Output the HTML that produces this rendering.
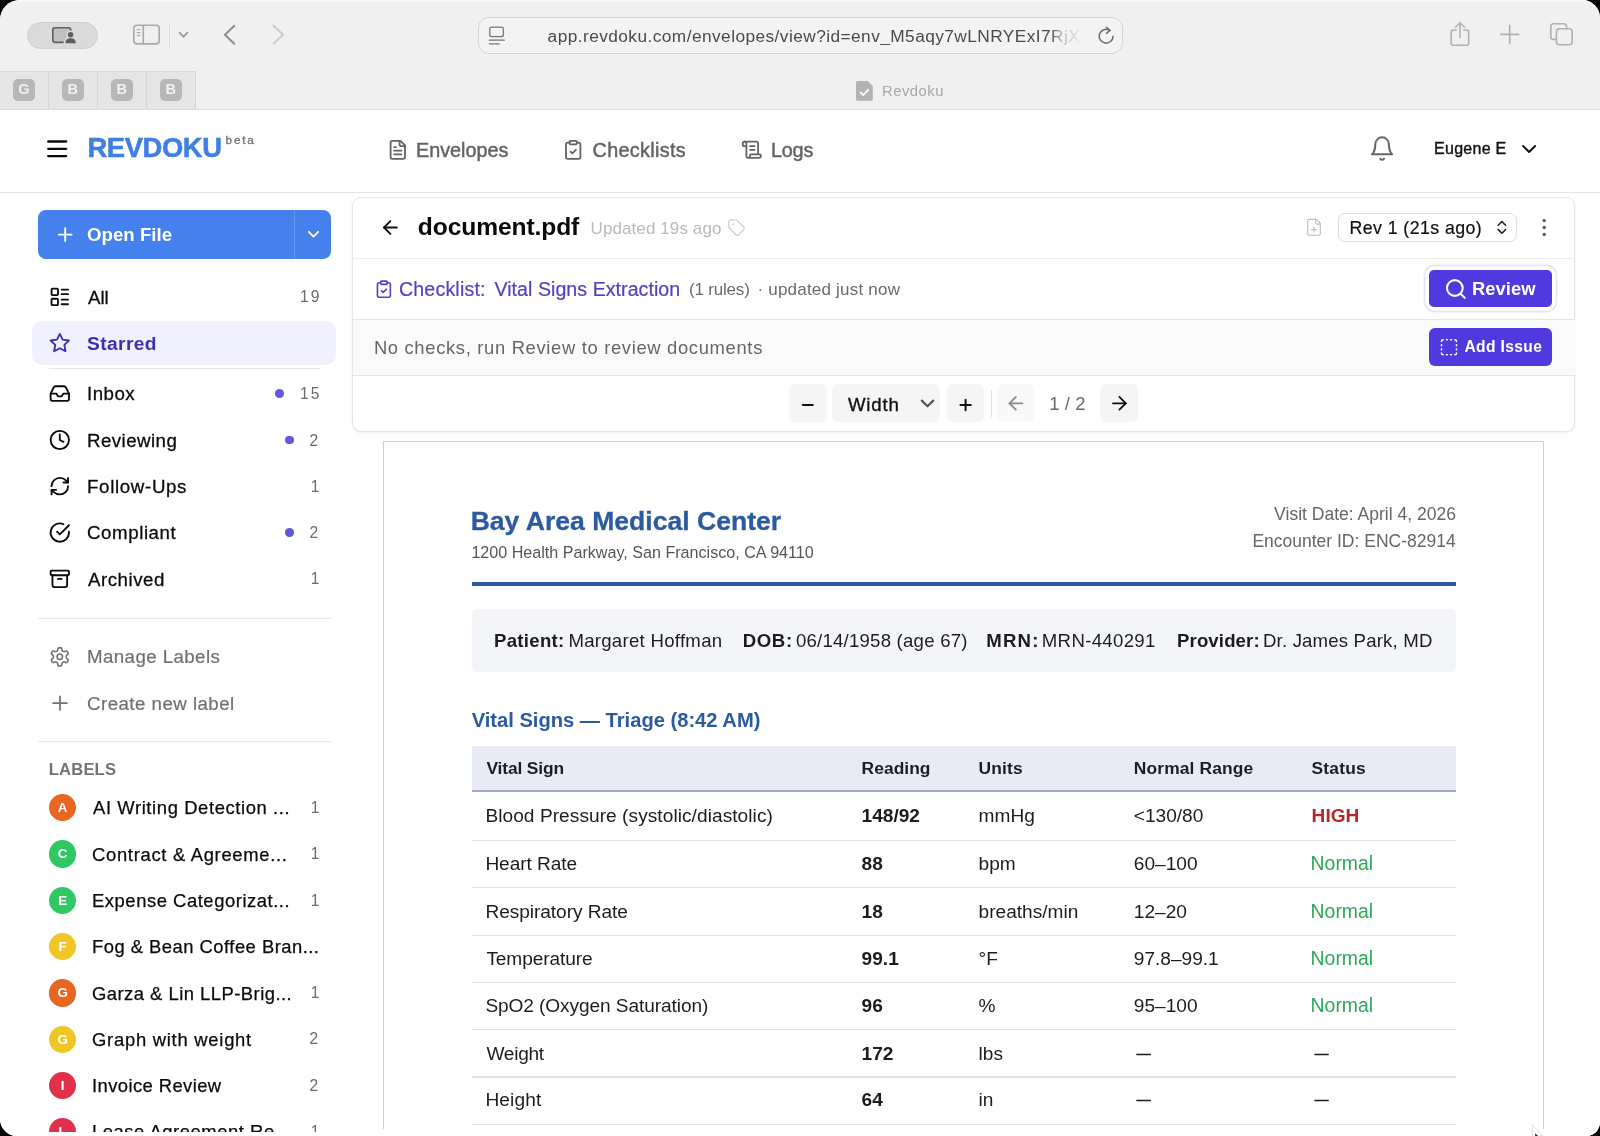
<!DOCTYPE html>
<html lang="en">
<head>
<meta charset="utf-8">
<title>Revdoku</title>
<style>
*{box-sizing:border-box;margin:0;padding:0}
html,body{width:1600px;height:1136px;overflow:hidden;background:#000}
body{font-family:"Liberation Sans",sans-serif;color:#111;position:relative}
#win{position:absolute;left:0;top:0;width:1600px;height:1136px;background:#fff;border-radius:20px 18px 14px 17px;overflow:hidden;will-change:transform}
.a{position:absolute}
.t{position:absolute;white-space:nowrap;line-height:1}
svg{position:absolute;overflow:visible}
.ic{fill:none;stroke:currentColor;stroke-width:2;stroke-linecap:round;stroke-linejoin:round}
/* browser chrome */
#chrome{left:0;top:0;width:1600px;height:110px;background:#f0f0f0;border-bottom:1px solid #dcdcdc}
#pins{left:0;top:71px;width:196px;height:38px;background:#e5e5e5;border-top:1px solid #d9d9d9;border-right:1px solid #d2d2d2}
.pin{position:absolute;top:0;width:49px;height:37px;border-right:1px solid #d4d4d4}
.pin i{position:absolute;left:13px;top:7.4px;width:21.6px;height:21.6px;border-radius:5px;background:#b7b7b7;color:#f1f1f1;font:bold 14.5px "Liberation Sans",sans-serif;text-align:center;line-height:21.6px;font-style:normal}
#url{left:477.5px;top:16.5px;width:645px;height:37px;border:1px solid #d3d3d3;border-radius:11px;background:#f3f3f3}
/* app header */
#hdr{left:0;top:110px;width:1600px;height:83px;background:#fff;border-bottom:1px solid #e3e3e6}
.nav{color:#5b5b5f;font-size:20px}
/* sidebar */
#side{left:0;top:193px;width:348.5px;height:943px;background:#fff;border-right:1px solid #e4e4e7}
.si{font-size:19px;color:#0b0b0f}
.cnt{font-size:17px;color:#6b6b73;text-align:right;width:40px}
.dot{position:absolute;width:8px;height:8px;border-radius:50%;background:#6358dc}
.hr{position:absolute;height:1px;background:#e6e6ea}
.lb{position:absolute;left:48px;width:28px;height:28px;border-radius:50%;color:#fff;font:bold 12px "Liberation Sans",sans-serif;text-align:center;line-height:28px}
/* main */
#main{left:348px;top:193px;width:1252px;height:943px;background:#fff}
#card{left:352px;top:197px;width:1223px;height:235px;background:#fff;border:1px solid #e6e6e9;border-radius:9px;box-shadow:0 1px 3px rgba(0,0,0,.07)}
.tb{position:absolute;top:385px;height:38px;background:#f5f5f6;border-radius:6px}
/* doc */
#page{left:383px;top:441px;width:1161px;height:720px;background:#fff;border:1px solid #cfcfcf}
.d{color:#1a1a1a;font-size:18px}
.th{font-weight:bold;font-size:17px;color:#1c1c24}
.rl{position:absolute;left:471.5px;width:984.3px;height:1.3px;background:#e2e3e6}
</style>
</head>
<body>
<div id="win">
<div id="chrome" class="a"></div>
<div class="a" style="left:27px;top:22px;width:71px;height:27px;border-radius:14px;background:#dadada;border:1px solid #cfcfcf"></div>
<div id="url" class="a"></div>
<div class="t" style="left:547.60px;top:28px;font-size:17.3px;color:#4a4a4a;letter-spacing:0.435px;-webkit-mask-image:linear-gradient(90deg,#000 0,#000 94.5%,rgba(0,0,0,.35) 96.5%,rgba(0,0,0,.05) 100%);mask-image:linear-gradient(90deg,#000 0,#000 94.5%,rgba(0,0,0,.35) 96.5%,rgba(0,0,0,.05) 100%);">app.revdoku.com/envelopes/view?id=env_M5aqy7wLNRYExI7RjX</div>
<div id="pins" class="a"><div class="pin" style="left:0px"><i>G</i></div><div class="pin" style="left:49px"><i>B</i></div><div class="pin" style="left:98px"><i>B</i></div><div class="pin" style="left:147px"><i>B</i></div></div>
<div class="t" style="left:882.00px;top:84px;font-size:14.8px;color:#a6a6a6;letter-spacing:0.500px;">Revdoku</div>
<div id="hdr" class="a"></div>
<div class="t" style="left:87.40px;top:134px;font-size:27.4px;color:#3f7ee3;font-weight:700;letter-spacing:-0.400px;-webkit-text-stroke:0.5px #3f7ee3;">REVDOKU</div>
<div class="t" style="left:225.60px;top:134px;font-size:11.7px;color:#707070;letter-spacing:1.800px;-webkit-text-stroke:0.3px #707070;">beta</div>
<div class="t" style="left:416.00px;top:141px;font-size:19.8px;color:#636366;-webkit-text-stroke:0.45px #636366;">Envelopes</div>
<div class="t" style="left:592.50px;top:141px;font-size:19.8px;color:#636366;letter-spacing:0.344px;-webkit-text-stroke:0.45px #636366;">Checklists</div>
<div class="t" style="left:771.00px;top:141px;font-size:19.8px;color:#636366;letter-spacing:-0.200px;-webkit-text-stroke:0.45px #636366;">Logs</div>
<div class="t" style="left:1434.00px;top:141px;font-size:16px;color:#111;letter-spacing:0.286px;-webkit-text-stroke:0.4px #111;">Eugene E</div>
<div id="side" class="a"></div>
<div class="a" style="left:38px;top:209.5px;width:293px;height:49px;border-radius:8px;background:#4481ec"></div>
<div class="a" style="left:293.8px;top:209.5px;width:1.4px;height:49px;background:#5e98f6"></div>
<div class="t" style="left:87.00px;top:226px;font-size:18.6px;color:#fff;font-weight:700;letter-spacing:0.050px;">Open File</div>
<div class="t" style="left:88.00px;top:289px;font-size:18.7px;color:#0a0a0a;-webkit-text-stroke:0.28px #0a0a0a;">All</div>
<div class="t" style="left:300.00px;top:289px;font-size:15.6px;color:#6b6b6b;letter-spacing:2.000px;">19</div>
<div class="a" style="left:32px;top:321px;width:304px;height:44px;border-radius:10px;background:#f0f0fe"></div>
<div class="t" style="left:87.00px;top:334px;font-size:19.2px;color:#3d2fb0;font-weight:700;letter-spacing:0.400px;">Starred</div>
<div class="hr" style="left:49px;top:368px;width:271px"></div>
<div class="t" style="left:87.00px;top:385px;font-size:18.7px;color:#0a0a0a;letter-spacing:0.500px;-webkit-text-stroke:0.28px #0a0a0a;">Inbox</div>
<div class="t" style="left:300.00px;top:386px;font-size:15.6px;color:#6b6b6b;letter-spacing:2.000px;">15</div>
<div class="dot" style="left:275.0px;top:389.3px;width:8.6px;height:8.6px"></div>
<div class="t" style="left:87.00px;top:432px;font-size:18.7px;color:#0a0a0a;letter-spacing:0.450px;-webkit-text-stroke:0.28px #0a0a0a;">Reviewing</div>
<div class="t" style="left:309.60px;top:433px;font-size:15.6px;color:#6b6b6b;">2</div>
<div class="dot" style="left:285.09999999999997px;top:435.7px;width:8.6px;height:8.6px"></div>
<div class="t" style="left:87.00px;top:478px;font-size:18.7px;color:#0a0a0a;letter-spacing:0.667px;-webkit-text-stroke:0.28px #0a0a0a;">Follow-Ups</div>
<div class="t" style="left:310.80px;top:479px;font-size:15.6px;color:#6b6b6b;">1</div>
<div class="t" style="left:87.00px;top:524px;font-size:18.7px;color:#0a0a0a;letter-spacing:0.575px;-webkit-text-stroke:0.28px #0a0a0a;">Compliant</div>
<div class="t" style="left:309.60px;top:525px;font-size:15.6px;color:#6b6b6b;">2</div>
<div class="dot" style="left:285.09999999999997px;top:528.3000000000001px;width:8.6px;height:8.6px"></div>
<div class="t" style="left:88.00px;top:571px;font-size:18.7px;color:#0a0a0a;letter-spacing:0.514px;-webkit-text-stroke:0.28px #0a0a0a;">Archived</div>
<div class="t" style="left:310.80px;top:571px;font-size:15.6px;color:#6b6b6b;">1</div>
<div class="hr" style="left:38px;top:617.6px;width:293px"></div>
<div class="t" style="left:87.00px;top:648px;font-size:18.7px;color:#707070;letter-spacing:0.417px;-webkit-text-stroke:0.2px #707070;">Manage Labels</div>
<div class="t" style="left:87.00px;top:695px;font-size:18.7px;color:#707070;letter-spacing:0.467px;-webkit-text-stroke:0.2px #707070;">Create new label</div>
<div class="hr" style="left:38px;top:741px;width:293px"></div>
<div class="t" style="left:48.80px;top:762px;font-size:16.6px;color:#737373;font-weight:700;letter-spacing:0.160px;">LABELS</div>
<div class="lb" style="top:794.0px;left:49px;width:27.4px;height:27.4px;line-height:28.6px;font-size:13.4px;background:#e8661f">A</div>
<div class="t" style="left:93.00px;top:799px;font-size:18.4px;color:#0a0a0a;letter-spacing:0.609px;-webkit-text-stroke:0.25px #0a0a0a;">AI Writing Detection ...</div>
<div class="t" style="left:310.80px;top:800px;font-size:15.6px;color:#6b6b6b;">1</div>
<div class="lb" style="top:840.3px;left:49px;width:27.4px;height:27.4px;line-height:28.6px;font-size:13.4px;background:#2fc862">C</div>
<div class="t" style="left:92.00px;top:846px;font-size:18.4px;color:#0a0a0a;letter-spacing:0.700px;-webkit-text-stroke:0.25px #0a0a0a;">Contract &amp; Agreeme...</div>
<div class="t" style="left:310.80px;top:846px;font-size:15.6px;color:#6b6b6b;">1</div>
<div class="lb" style="top:886.6px;left:49px;width:27.4px;height:27.4px;line-height:28.6px;font-size:13.4px;background:#2fc862">E</div>
<div class="t" style="left:92.00px;top:892px;font-size:18.4px;color:#0a0a0a;letter-spacing:0.552px;-webkit-text-stroke:0.25px #0a0a0a;">Expense Categorizat...</div>
<div class="t" style="left:310.80px;top:893px;font-size:15.6px;color:#6b6b6b;">1</div>
<div class="lb" style="top:932.9px;left:49px;width:27.4px;height:27.4px;line-height:28.6px;font-size:13.4px;background:#f0c526">F</div>
<div class="t" style="left:92.00px;top:938px;font-size:18.4px;color:#0a0a0a;letter-spacing:0.483px;-webkit-text-stroke:0.25px #0a0a0a;">Fog &amp; Bean Coffee Bran...</div>
<div class="lb" style="top:979.2px;left:49px;width:27.4px;height:27.4px;line-height:28.6px;font-size:13.4px;background:#e8661f">G</div>
<div class="t" style="left:92.00px;top:985px;font-size:18.4px;color:#0a0a0a;letter-spacing:0.482px;-webkit-text-stroke:0.25px #0a0a0a;">Garza &amp; Lin LLP-Brig...</div>
<div class="t" style="left:310.80px;top:985px;font-size:15.6px;color:#6b6b6b;">1</div>
<div class="lb" style="top:1025.5px;left:49px;width:27.4px;height:27.4px;line-height:28.6px;font-size:13.4px;background:#f0c526">G</div>
<div class="t" style="left:92.00px;top:1031px;font-size:18.4px;color:#0a0a0a;letter-spacing:0.750px;-webkit-text-stroke:0.25px #0a0a0a;">Graph with weight</div>
<div class="t" style="left:309.60px;top:1031px;font-size:15.6px;color:#6b6b6b;">2</div>
<div class="lb" style="top:1071.8px;left:49px;width:27.4px;height:27.4px;line-height:28.6px;font-size:13.4px;background:#e0304a">I</div>
<div class="t" style="left:92.00px;top:1077px;font-size:18.4px;color:#0a0a0a;letter-spacing:0.415px;-webkit-text-stroke:0.25px #0a0a0a;">Invoice Review</div>
<div class="t" style="left:309.60px;top:1078px;font-size:15.6px;color:#6b6b6b;">2</div>
<div class="lb" style="top:1118.1px;left:49px;width:27.4px;height:27.4px;line-height:28.6px;font-size:13.4px;background:#e0304a">L</div>
<div class="t" style="left:92.00px;top:1123px;font-size:18.4px;color:#0a0a0a;letter-spacing:0.550px;-webkit-text-stroke:0.25px #0a0a0a;">Lease Agreement Re...</div>
<div class="t" style="left:310.80px;top:1124px;font-size:15.6px;color:#6b6b6b;">1</div>
<div id="main" class="a"></div>
<div id="card" class="a"></div>
<div class="a" style="left:353px;top:258px;width:1222px;height:1px;background:#ececef"></div>
<div class="a" style="left:353px;top:319px;width:1222px;height:57px;background:#fafafa;border-top:1px solid #e6e6ea;border-bottom:1px solid #e6e6ea"></div>
<div class="t" style="left:417.80px;top:215px;font-size:24.6px;color:#0a0a0a;font-weight:700;letter-spacing:-0.100px;">document.pdf</div>
<div class="t" style="left:590.50px;top:220px;font-size:17px;color:#b9b9bd;letter-spacing:0.100px;">Updated 19s ago</div>
<div class="a" style="left:1337.5px;top:212.8px;width:179px;height:29.2px;border:1px solid #dcdce0;border-radius:7px;background:#fff"></div>
<div class="t" style="left:1349.50px;top:220px;font-size:17.8px;color:#111;letter-spacing:0.407px;-webkit-text-stroke:0.2px #111;">Rev 1 (21s ago)</div>
<div class="t" style="left:398.90px;top:280px;font-size:19.6px;color:#5142c4;letter-spacing:0.189px;-webkit-text-stroke:0.2px #5142c4;">Checklist:</div>
<div class="t" style="left:494.40px;top:280px;font-size:19.6px;color:#5142c4;letter-spacing:0.048px;-webkit-text-stroke:0.2px #5142c4;">Vital Signs Extraction</div>
<div class="t" style="left:688.90px;top:281px;font-size:17px;color:#6a6a6e;letter-spacing:-0.175px;">(1 rules)</div>
<div class="t" style="left:757.50px;top:281px;font-size:17px;color:#6a6a6e;letter-spacing:0.206px;">· updated just now</div>
<div class="a" style="left:1428.5px;top:270.2px;width:123.7px;height:37.2px;border-radius:5px;background:#5039de;box-shadow:0 0 0 3.6px #fff,0 0 0 5.4px #e6e5fa"></div>
<div class="t" style="left:1472.10px;top:280px;font-size:18.4px;color:#fff;font-weight:700;">Review</div>
<div class="t" style="left:373.90px;top:339px;font-size:18.4px;color:#666;letter-spacing:0.665px;">No checks, run Review to review documents</div>
<div class="a" style="left:1429px;top:328.4px;width:123.2px;height:37.8px;border-radius:6px;background:#5039de"></div>
<div class="t" style="left:1464.40px;top:339px;font-size:15.6px;color:#fff;font-weight:700;letter-spacing:0.362px;">Add Issue</div>
<div class="a" style="left:788.5px;top:384px;width:38.0px;height:38px;border-radius:6px;background:#f5f5f6"></div>
<div class="a" style="left:832px;top:384px;width:108.39999999999998px;height:38px;border-radius:6px;background:#f5f5f6"></div>
<div class="a" style="left:946.9px;top:384px;width:37.10000000000002px;height:38px;border-radius:6px;background:#f5f5f6"></div>
<div class="a" style="left:996.9px;top:384px;width:37.10000000000002px;height:38px;border-radius:6px;background:#f9f9fa"></div>
<div class="a" style="left:1100.1px;top:384px;width:37.90000000000009px;height:38px;border-radius:6px;background:#f5f5f6"></div>
<div class="t" style="left:847.90px;top:396px;font-size:18.6px;color:#111;letter-spacing:0.825px;-webkit-text-stroke:0.35px #111;">Width</div>
<div class="a" style="left:990.5px;top:390px;width:1px;height:27px;background:#dfdfe3"></div>
<div class="t" style="left:1049.30px;top:395px;font-size:18.4px;color:#6a6a6e;letter-spacing:0.075px;">1 / 2</div>
<div id="page" class="a"></div>
<div class="t" style="left:470.65px;top:508px;font-size:26.57px;color:#2c5aa0;font-weight:700;-webkit-text-stroke:0.3px #2c5aa0;">Bay Area Medical Center</div>
<div class="t" style="left:471.40px;top:544px;font-size:16.12px;color:#555;">1200 Health Parkway, San Francisco, CA 94110</div>
<div class="t" style="left:1274.12px;top:506px;font-size:17.54px;color:#666;">Visit Date: April 4, 2026</div>
<div class="t" style="left:1252.38px;top:533px;font-size:17.5px;color:#666;">Encounter ID: ENC-82914</div>
<div class="a" style="left:471.5px;top:582.4px;width:984.3px;height:3.3px;background:#2c5aa0"></div>
<div class="a" style="left:471.5px;top:608.8px;width:984.3px;height:63.2px;border-radius:5px;background:#f3f5f8"></div>
<div class="t" style="left:494.00px;top:632px;font-size:18.6px;color:#1c1c1c;font-weight:700;letter-spacing:0.300px;">Patient:</div>
<div class="t" style="left:568.40px;top:632px;font-size:18.6px;color:#1c1c1c;letter-spacing:0.280px;">Margaret Hoffman</div>
<div class="t" style="left:742.75px;top:632px;font-size:18.6px;color:#1c1c1c;font-weight:700;letter-spacing:0.617px;">DOB:</div>
<div class="t" style="left:795.90px;top:632px;font-size:18.6px;color:#1c1c1c;letter-spacing:0.228px;">06/14/1958 (age 67)</div>
<div class="t" style="left:986.20px;top:632px;font-size:18.6px;color:#1c1c1c;font-weight:700;letter-spacing:1.200px;">MRN:</div>
<div class="t" style="left:1041.80px;top:632px;font-size:18.6px;color:#1c1c1c;letter-spacing:0.333px;">MRN-440291</div>
<div class="t" style="left:1177.00px;top:632px;font-size:18.6px;color:#1c1c1c;font-weight:700;letter-spacing:0.125px;">Provider:</div>
<div class="t" style="left:1263.00px;top:632px;font-size:18.6px;color:#1c1c1c;letter-spacing:0.176px;">Dr. James Park, MD</div>
<div class="t" style="left:471.65px;top:710px;font-size:20.15px;color:#2c5aa0;font-weight:700;">Vital Signs — Triage (8:42 AM)</div>
<div class="a" style="left:471.5px;top:746.2px;width:984.3px;height:43.6px;background:#e8ebf5"></div>
<div class="a" style="left:471.5px;top:789.6px;width:984.3px;height:2.6px;background:#a4a8c6"></div>
<div class="t" style="left:486.40px;top:760px;font-size:17.4px;color:#1c1c24;font-weight:700;letter-spacing:-0.133px;">Vital Sign</div>
<div class="t" style="left:861.60px;top:760px;font-size:17.4px;color:#1c1c24;font-weight:700;letter-spacing:0.050px;">Reading</div>
<div class="t" style="left:978.60px;top:760px;font-size:17.4px;color:#1c1c24;font-weight:700;letter-spacing:0.125px;">Units</div>
<div class="t" style="left:1133.80px;top:760px;font-size:17.4px;color:#1c1c24;font-weight:700;letter-spacing:0.136px;">Normal Range</div>
<div class="t" style="left:1311.60px;top:760px;font-size:17.4px;color:#1c1c24;font-weight:700;letter-spacing:0.180px;">Status</div>
<div class="t" style="left:485.40px;top:806px;font-size:19.1px;color:#1c1c1c;letter-spacing:0.059px;">Blood Pressure (systolic/diastolic)</div>
<div class="t" style="left:861.60px;top:806px;font-size:19.1px;color:#1c1c1c;font-weight:700;">148/92</div>
<div class="t" style="left:978.60px;top:806px;font-size:19.1px;color:#1c1c1c;">mmHg</div>
<div class="t" style="left:1133.80px;top:806px;font-size:19.1px;color:#1c1c1c;">&lt;130/80</div>
<div class="t" style="left:1311.60px;top:806px;font-size:19.1px;color:#b3272d;font-weight:700;">HIGH</div>
<div class="rl" style="top:839.9px"></div>
<div class="t" style="left:485.40px;top:854px;font-size:19.1px;color:#1c1c1c;letter-spacing:-0.067px;">Heart Rate</div>
<div class="t" style="left:861.60px;top:854px;font-size:19.1px;color:#1c1c1c;font-weight:700;">88</div>
<div class="t" style="left:978.60px;top:854px;font-size:19.1px;color:#1c1c1c;">bpm</div>
<div class="t" style="left:1133.80px;top:854px;font-size:19.1px;color:#1c1c1c;">60–100</div>
<div class="t" style="left:1310.60px;top:854px;font-size:19.400000000000002px;color:#2aa85a;">Normal</div>
<div class="rl" style="top:887.2px"></div>
<div class="t" style="left:485.40px;top:902px;font-size:19.1px;color:#1c1c1c;letter-spacing:-0.053px;">Respiratory Rate</div>
<div class="t" style="left:861.60px;top:902px;font-size:19.1px;color:#1c1c1c;font-weight:700;">18</div>
<div class="t" style="left:978.60px;top:902px;font-size:19.1px;color:#1c1c1c;">breaths/min</div>
<div class="t" style="left:1133.80px;top:902px;font-size:19.1px;color:#1c1c1c;">12–20</div>
<div class="t" style="left:1310.60px;top:902px;font-size:19.400000000000002px;color:#2aa85a;">Normal</div>
<div class="rl" style="top:934.5px"></div>
<div class="t" style="left:486.40px;top:949px;font-size:19.1px;color:#1c1c1c;letter-spacing:-0.100px;">Temperature</div>
<div class="t" style="left:861.60px;top:949px;font-size:19.1px;color:#1c1c1c;font-weight:700;">99.1</div>
<div class="t" style="left:978.60px;top:949px;font-size:19.1px;color:#1c1c1c;">°F</div>
<div class="t" style="left:1133.80px;top:949px;font-size:19.1px;color:#1c1c1c;">97.8–99.1</div>
<div class="t" style="left:1310.60px;top:949px;font-size:19.400000000000002px;color:#2aa85a;">Normal</div>
<div class="rl" style="top:981.8px"></div>
<div class="t" style="left:485.40px;top:996px;font-size:19.1px;color:#1c1c1c;letter-spacing:-0.087px;">SpO2 (Oxygen Saturation)</div>
<div class="t" style="left:861.60px;top:996px;font-size:19.1px;color:#1c1c1c;font-weight:700;">96</div>
<div class="t" style="left:978.60px;top:996px;font-size:19.1px;color:#1c1c1c;">%</div>
<div class="t" style="left:1133.80px;top:996px;font-size:19.1px;color:#1c1c1c;">95–100</div>
<div class="t" style="left:1310.60px;top:996px;font-size:19.400000000000002px;color:#2aa85a;">Normal</div>
<div class="rl" style="top:1029.1px"></div>
<div class="t" style="left:486.40px;top:1044px;font-size:19.1px;color:#1c1c1c;letter-spacing:-0.260px;">Weight</div>
<div class="t" style="left:861.60px;top:1044px;font-size:19.1px;color:#1c1c1c;font-weight:700;">172</div>
<div class="t" style="left:978.60px;top:1044px;font-size:19.1px;color:#1c1c1c;">lbs</div>
<div class="t" style="left:1136.75px;top:1047px;font-size:13.78px;color:#1c1c1c;-webkit-text-stroke:0.7px #1c1c1c;">—</div>
<div class="t" style="left:1314.65px;top:1047px;font-size:13.58px;color:#1c1c1c;-webkit-text-stroke:0.7px #1c1c1c;">—</div>
<div class="rl" style="top:1076.4px"></div>
<div class="t" style="left:485.40px;top:1090px;font-size:19.1px;color:#1c1c1c;letter-spacing:0.160px;">Height</div>
<div class="t" style="left:861.60px;top:1090px;font-size:19.1px;color:#1c1c1c;font-weight:700;">64</div>
<div class="t" style="left:978.60px;top:1090px;font-size:19.1px;color:#1c1c1c;">in</div>
<div class="t" style="left:1136.75px;top:1093px;font-size:13.78px;color:#1c1c1c;-webkit-text-stroke:0.7px #1c1c1c;">—</div>
<div class="t" style="left:1314.65px;top:1093px;font-size:13.58px;color:#1c1c1c;-webkit-text-stroke:0.7px #1c1c1c;">—</div>
<div class="rl" style="top:1123.7px"></div>
<svg class="a" style="left:0;top:0;pointer-events:none" width="1600" height="1136" viewBox="0 0 1600 1136"><rect x="52.8" y="27.8" width="18" height="14.6" rx="2.5" fill="#c0c0c0" stroke="#5e5e5e" stroke-width="1.6"/><circle cx="70.6" cy="34.6" r="4.2" fill="#dadada"/><path d="M63.4 44.6C63.4 38.6 66.6 36.4 70.6 36.4C74.6 36.4 77.8 38.6 77.8 44.6z" fill="#dadada"/><circle cx="70.6" cy="34.8" r="2.7" fill="#5e5e5e"/><path d="M65.5 43.2C65.5 39.6 67.6 38.3 70.6 38.3C73.6 38.3 75.7 39.6 75.7 43.2z" fill="#5e5e5e"/>
<rect x="133.8" y="25.3" width="25.4" height="18.6" rx="3.2" fill="none" stroke="#a9a9a9" stroke-width="1.6"/><path d="M143.3 25.3v18.6" stroke="#a9a9a9" stroke-width="1.6"/><path d="M136.8 29.6h3.6M136.8 32.6h3.6M136.8 35.6h3.6" stroke="#a9a9a9" stroke-width="1.2"/>
<path d="M169.5 24v24" stroke="#dedede" stroke-width="1"/>
<path d="M179.6 32.6l3.9 4.2 3.9-4.2" fill="none" stroke="#9a9a9a" stroke-width="1.7" stroke-linecap="round" stroke-linejoin="round"/>
<path d="M234.3 25.8l-9.4 9 9.4 9" fill="none" stroke="#8b8b8b" stroke-width="1.9" stroke-linecap="round" stroke-linejoin="round"/>
<path d="M273.6 25.8l9.4 9-9.4 9" fill="none" stroke="#cbcbcb" stroke-width="1.9" stroke-linecap="round" stroke-linejoin="round"/>
<rect x="489.8" y="27.2" width="13.6" height="9.4" rx="2" fill="none" stroke="#777" stroke-width="1.3"/><path d="M489.3 40.2h15M489.3 43.8h10" stroke="#777" stroke-width="1.3" stroke-linecap="round"/>
<path d="M1109.6 30.3a6.9 6.9 0 1 0 3.4 5.9" fill="none" stroke="#6b6b6b" stroke-width="1.5" stroke-linecap="round"/><path d="M1106.3 27.2l3.8 3.2-3.6 2.9" fill="none" stroke="#6b6b6b" stroke-width="1.5" stroke-linecap="round" stroke-linejoin="round"/>
<path d="M1456.2 30h-2.6a2.4 2.4 0 0 0-2.4 2.4v10.5a2.4 2.4 0 0 0 2.4 2.4h12.7a2.4 2.4 0 0 0 2.4-2.4V32.4a2.4 2.4 0 0 0-2.4-2.4h-2.6" fill="none" stroke="#b1b1b1" stroke-width="1.6" stroke-linecap="round"/><path d="M1460 37.6V23M1455.7 27l4.3-4.3 4.3 4.3" fill="none" stroke="#b1b1b1" stroke-width="1.6" stroke-linecap="round" stroke-linejoin="round"/>
<path d="M1500.8 34.3h17.8M1509.7 25.4v17.8" stroke="#b1b1b1" stroke-width="1.7" stroke-linecap="round"/>
<rect x="1550.8" y="23.8" width="15.8" height="15.6" rx="3" fill="none" stroke="#b1b1b1" stroke-width="1.6"/><rect x="1556.4" y="28.8" width="15.8" height="16" rx="3" fill="#f0f0f0" stroke="#b1b1b1" stroke-width="1.6"/>
<path d="M857.6 81h10.2l5 5v13.2a1.6 1.6 0 0 1-1.6 1.6h-13.6a1.6 1.6 0 0 1-1.6-1.6V82.6a1.6 1.6 0 0 1 1.6-1.6z" fill="#b2b2b2"/><path d="M860.6 92.4l2.7 2.8 5-5.6" fill="none" stroke="#fff" stroke-width="1.7" stroke-linecap="round" stroke-linejoin="round"/>
<path d="M48.2 141.5h18M48.2 148.8h18M48.2 156.1h18" stroke="#0a0a0a" stroke-width="2.3" stroke-linecap="round"/>
<g transform="translate(387.0,139.0) scale(0.9000)" fill="none" stroke="#636366" stroke-width="2" stroke-linecap="round" stroke-linejoin="round" ><path d="M15 2H6a2 2 0 0 0-2 2v16a2 2 0 0 0 2 2h12a2 2 0 0 0 2-2V7Z"/><path d="M14 2v4a2 2 0 0 0 2 2h4"/><path d="M10 9H8"/><path d="M16 13H8"/><path d="M16 17H8"/></g>
<g transform="translate(562.4,139.0) scale(0.9000)" fill="none" stroke="#636366" stroke-width="2" stroke-linecap="round" stroke-linejoin="round" ><rect width="8" height="4" x="8" y="2" rx="1" ry="1"/><path d="M16 4h2a2 2 0 0 1 2 2v14a2 2 0 0 1-2 2H6a2 2 0 0 1-2-2V6a2 2 0 0 1 2-2h2"/><path d="m9 14 2 2 4-4"/></g>
<g transform="translate(741.0,139.0) scale(0.9000)" fill="none" stroke="#636366" stroke-width="2" stroke-linecap="round" stroke-linejoin="round" ><path d="M15 12h-5"/><path d="M15 8h-5"/><path d="M19 17V5a2 2 0 0 0-2-2H4"/><path d="M8 21h12a2 2 0 0 0 2-2v-1a1 1 0 0 0-1-1H11a1 1 0 0 0-1 1v1a2 2 0 1 1-4 0V5a2 2 0 1 0-4 0v2a1 1 0 0 0 1 1h3"/></g>
<g transform="translate(1368.6,135.1) scale(1.1250)" fill="none" stroke="#666" stroke-width="1.75" stroke-linecap="round" stroke-linejoin="round" ><path d="M6 8a6 6 0 0 1 12 0c0 7 3 9 3 9H3s3-2 3-9"/><path d="M10.3 21a1.94 1.94 0 0 0 3.4 0"/></g>
<g transform="translate(1517.1,137.0) scale(1.0000)" fill="none" stroke="#111" stroke-width="2" stroke-linecap="round" stroke-linejoin="round" ><path d="m6 9 6 6 6-6"/></g>
<path d="M58.8 234.6h12.8M65.2 228.2v12.8" stroke="#fff" stroke-width="1.9" stroke-linecap="round"/>
<path d="M308.8 231.8l4.7 4.9 4.7-4.9" fill="none" stroke="#fff" stroke-width="1.8" stroke-linecap="round" stroke-linejoin="round"/>
<g transform="translate(48.8,285.9) scale(0.9167)" fill="none" stroke="#0a0a0a" stroke-width="2" stroke-linecap="round" stroke-linejoin="round" ><rect width="7" height="7" x="3" y="3" rx="1"/><rect width="7" height="7" x="3" y="14" rx="1"/><path d="M14 4h7"/><path d="M14 9h7"/><path d="M14 15h7"/><path d="M14 20h7"/></g>
<g transform="translate(48.8,332.0) scale(0.9167)" fill="none" stroke="#3d2fb0" stroke-width="2" stroke-linecap="round" stroke-linejoin="round" ><polygon points="12 2 15.09 8.26 22 9.27 17 14.14 18.18 21.02 12 17.77 5.82 21.02 7 14.14 2 9.27 8.91 8.26 12 2"/></g>
<g transform="translate(48.8,382.6) scale(0.9167)" fill="none" stroke="#0a0a0a" stroke-width="2" stroke-linecap="round" stroke-linejoin="round" ><polyline points="22 12 16 12 14 15 10 15 8 12 2 12"/><path d="M5.45 5.11 2 12v6a2 2 0 0 0 2 2h16a2 2 0 0 0 2-2v-6l-3.45-6.89A2 2 0 0 0 16.76 4H7.24a2 2 0 0 0-1.79 1.11z"/></g>
<g transform="translate(48.8,429.0) scale(0.9167)" fill="none" stroke="#0a0a0a" stroke-width="2" stroke-linecap="round" stroke-linejoin="round" ><circle cx="12" cy="12" r="10"/><polyline points="12 6 12 12 16 14"/></g>
<g transform="translate(48.8,475.2) scale(0.9167)" fill="none" stroke="#0a0a0a" stroke-width="2" stroke-linecap="round" stroke-linejoin="round" ><path d="M3 12a9 9 0 0 1 9-9 9.75 9.75 0 0 1 6.74 2.74L21 8"/><path d="M21 3v5h-5"/><path d="M21 12a9 9 0 0 1-9 9 9.75 9.75 0 0 1-6.74-2.74L3 16"/><path d="M8 16H3v5"/></g>
<g transform="translate(48.8,521.6) scale(0.9167)" fill="none" stroke="#0a0a0a" stroke-width="2" stroke-linecap="round" stroke-linejoin="round" ><path d="M22 11.08V12a10 10 0 1 1-5.93-9.14"/><path d="m9 11 3 3L22 4"/></g>
<g transform="translate(48.8,567.9) scale(0.9167)" fill="none" stroke="#0a0a0a" stroke-width="2" stroke-linecap="round" stroke-linejoin="round" ><rect width="20" height="5" x="2" y="3" rx="1"/><path d="M4 8v11a2 2 0 0 0 2 2h12a2 2 0 0 0 2-2V8"/><path d="M10 12h4"/></g>
<g transform="translate(48.8,645.8) scale(0.9167)" fill="none" stroke="#707070" stroke-width="1.7" stroke-linecap="round" stroke-linejoin="round" ><path d="M12.22 2h-.44a2 2 0 0 0-2 2v.18a2 2 0 0 1-1 1.73l-.43.25a2 2 0 0 1-2 0l-.15-.08a2 2 0 0 0-2.73.73l-.22.38a2 2 0 0 0 .73 2.73l.15.1a2 2 0 0 1 1 1.72v.51a2 2 0 0 1-1 1.74l-.15.09a2 2 0 0 0-.73 2.73l.22.38a2 2 0 0 0 2.73.73l.15-.08a2 2 0 0 1 2 0l.43.25a2 2 0 0 1 1 1.73V20a2 2 0 0 0 2 2h.44a2 2 0 0 0 2-2v-.18a2 2 0 0 1 1-1.73l.43-.25a2 2 0 0 1 2 0l.15.08a2 2 0 0 0 2.73-.73l.22-.39a2 2 0 0 0-.73-2.73l-.15-.08a2 2 0 0 1-1-1.74v-.5a2 2 0 0 1 1-1.74l.15-.09a2 2 0 0 0 .73-2.73l-.22-.38a2 2 0 0 0-2.73-.73l-.15.08a2 2 0 0 1-2 0l-.43-.25a2 2 0 0 1-1-1.73V4a2 2 0 0 0-2-2z"/><circle cx="12" cy="12" r="3"/></g>
<path d="M53.2 703.2h13.6M60 696.4v13.6" stroke="#707070" stroke-width="1.7" stroke-linecap="round"/>
<g transform="translate(379.4,216.5) scale(0.9167)" fill="none" stroke="#111" stroke-width="2" stroke-linecap="round" stroke-linejoin="round" ><path d="m12 19-7-7 7-7"/><path d="M19 12H5"/></g>
<g transform="translate(727.25,218.35) scale(0.7708)" fill="none" stroke="#cfcfd3" stroke-width="1.6" stroke-linecap="round" stroke-linejoin="round" ><path d="M12.586 2.586A2 2 0 0 0 11.172 2H4a2 2 0 0 0-2 2v7.172a2 2 0 0 0 .586 1.414l8.704 8.704a2.426 2.426 0 0 0 3.42 0l6.58-6.58a2.426 2.426 0 0 0 0-3.42z"/><circle cx="7.5" cy="7.5" r=".5"/></g>
<g transform="translate(1304.5,217.8) scale(0.7917)" fill="none" stroke="#bdbdc1" stroke-width="1.4" stroke-linecap="round" stroke-linejoin="round" ><path d="M15 2H6a2 2 0 0 0-2 2v16a2 2 0 0 0 2 2h12a2 2 0 0 0 2-2V7Z"/><path d="M14 2v4a2 2 0 0 0 2 2h4"/><path d="M9 15h6"/><path d="M12 18v-6"/></g>
<g transform="translate(1493.1,218.6) scale(0.7333)" fill="none" stroke="#222" stroke-width="2.2" stroke-linecap="round" stroke-linejoin="round" ><path d="m7 15 5 5 5-5"/><path d="m7 9 5-5 5 5"/></g>
<circle cx="1544.2" cy="220.6" r="1.7" fill="#555"/><circle cx="1544.2" cy="227.5" r="1.7" fill="#555"/><circle cx="1544.2" cy="234.4" r="1.7" fill="#555"/>
<g transform="translate(374.2,279.5) scale(0.8083)" fill="none" stroke="#5142c4" stroke-width="2" stroke-linecap="round" stroke-linejoin="round" ><rect width="8" height="4" x="8" y="2" rx="1" ry="1"/><path d="M16 4h2a2 2 0 0 1 2 2v14a2 2 0 0 1-2 2H6a2 2 0 0 1-2-2V6a2 2 0 0 1 2-2h2"/><path d="m9 14 2 2 4-4"/></g>
<g transform="translate(1444.0,277.2) scale(0.9833)" fill="none" stroke="#fff" stroke-width="2.1" stroke-linecap="round" stroke-linejoin="round" ><circle cx="11" cy="11" r="8"/><path d="m21 21-4.3-4.3"/></g>
<g transform="translate(1439.0,337.3) scale(0.8333)" fill="none" stroke="#fff" stroke-width="1.9" stroke-linecap="round" stroke-linejoin="round" ><path d="M5 3a2 2 0 0 0-2 2"/><path d="M19 3a2 2 0 0 1 2 2"/><path d="M21 19a2 2 0 0 1-2 2"/><path d="M5 21a2 2 0 0 1-2-2"/><path d="M9 3h1"/><path d="M9 21h1"/><path d="M14 3h1"/><path d="M14 21h1"/><path d="M3 9v1"/><path d="M21 9v1"/><path d="M3 14v1"/><path d="M21 14v1"/></g>
<path d="M802.8 405h10" stroke="#111" stroke-width="2" stroke-linecap="round"/>
<path d="M921.8 400.6l5.7 5.7 5.7-5.7" fill="none" stroke="#555" stroke-width="2.2" stroke-linecap="round" stroke-linejoin="round"/>
<path d="M960.4 405h10.4M965.6 399.8v10.4" stroke="#111" stroke-width="2" stroke-linecap="round"/>
<g transform="translate(1004.9,392.3) scale(0.9167)" fill="none" stroke="#8a8a8e" stroke-width="2" stroke-linecap="round" stroke-linejoin="round" ><path d="m12 19-7-7 7-7"/><path d="M19 12H5"/></g>
<g transform="translate(1108.4,392.3) scale(0.9167)" fill="none" stroke="#111" stroke-width="2" stroke-linecap="round" stroke-linejoin="round" ><path d="M5 12h14"/><path d="m12 5 7 7-7 7"/></g></svg>
<div class="a" style="left:0;top:1131.6px;width:1600px;height:5px;background:#fff"></div>
<div class="a" style="left:348px;top:1128.7px;width:1252px;height:8px;background:#fff"></div>
<div class="a" style="left:0;top:0;width:1600px;height:1.5px;background:rgba(255,255,255,.55)"></div>
<svg class="a" style="left:1528px;top:1120px" width="16" height="16" viewBox="1528 1120 16 16"><path d="M1532.3 1124.4v13l10-2z" fill="#fff" stroke="#d8d8d8" stroke-width=".8"/><path d="M1535.2 1133.2l3 3h-3z" fill="#222"/></svg>
</div>
</body>
</html>
